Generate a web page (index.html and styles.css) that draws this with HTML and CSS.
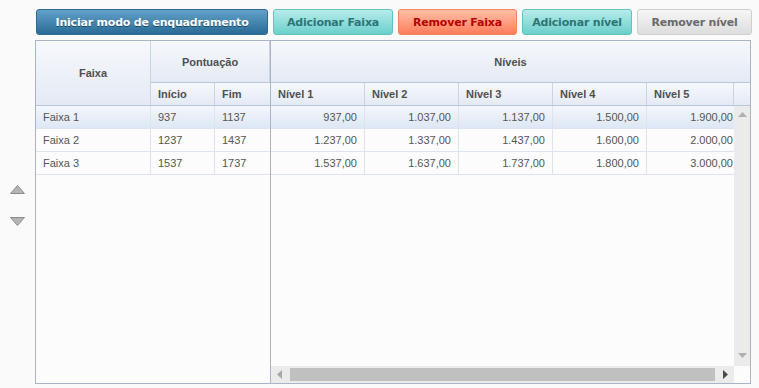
FILE: index.html
```html
<!DOCTYPE html>
<html lang="pt">
<head>
  <meta charset="UTF-8">
  <title>Faixas e níveis</title>
  <link rel="stylesheet" href="styles.css">
</head>
<body>
  <!--barra de botões-->
  <div class="toolbar">
    <button class="btn btn-primary">Iniciar modo de enquadramento</button>
    <button class="btn btn-teal btn-add-band">Adicionar Faixa</button>
    <button class="btn btn-danger">Remover Faixa</button>
    <button class="btn btn-teal btn-add-level">Adicionar nível</button>
    <button class="btn btn-grey">Remover nível</button>
  </div>

  <div class="workspace">
    <!--mover faixa para cima / baixo-->
    <div class="movers">
      <svg width="15" height="9" viewBox="0 0 15 9"><path d="M7.5 0.5 L14.5 8.5 L0.5 8.5 Z" fill="#b4b4b4" stroke="#8c8c8c"/></svg>
      <svg width="15" height="9" viewBox="0 0 15 9"><path d="M0.5 0.5 L14.5 0.5 L7.5 8.5 Z" fill="#b4b4b4" stroke="#8c8c8c"/></svg>
    </div>

    <div class="grid">
      <!--colunas fixas-->
      <div class="pane-left">
        <div class="head head-left">
          <div class="hc hc-faixa">Faixa</div>
          <div class="hc hc-center">Pontuação</div>
          <div class="hc">Início</div>
          <div class="hc">Fim</div>
        </div>
        <div class="row row-left selected">
          <div class="cell">Faixa 1</div><div class="cell">937</div><div class="cell">1137</div>
        </div>
        <div class="row row-left">
          <div class="cell">Faixa 2</div><div class="cell">1237</div><div class="cell">1437</div>
        </div>
        <div class="row row-left">
          <div class="cell">Faixa 3</div><div class="cell">1537</div><div class="cell">1737</div>
        </div>
      </div>

      <!--níveis (rolagem)-->
      <div class="pane-right">
        <div class="head head-right">
          <div class="hc hc-center hc-levels">Níveis</div>
          <div class="hc">Nível 1</div>
          <div class="hc">Nível 2</div>
          <div class="hc">Nível 3</div>
          <div class="hc">Nível 4</div>
          <div class="hc">Nível 5</div>
          <div class="hc hc-fill"></div>
        </div>
        <div class="body-right">
          <div class="viewport">
            <div class="row row-right selected">
              <div class="cell num">937,00</div><div class="cell num">1.037,00</div><div class="cell num">1.137,00</div><div class="cell num">1.500,00</div><div class="cell num">1.900,00</div>
            </div>
            <div class="row row-right">
              <div class="cell num">1.237,00</div><div class="cell num">1.337,00</div><div class="cell num">1.437,00</div><div class="cell num">1.600,00</div><div class="cell num">2.000,00</div>
            </div>
            <div class="row row-right">
              <div class="cell num">1.537,00</div><div class="cell num">1.637,00</div><div class="cell num">1.737,00</div><div class="cell num">1.800,00</div><div class="cell num">3.000,00</div>
            </div>
          </div>
          <div class="vscroll">
            <svg width="9" height="5" viewBox="0 0 9 5"><path d="M4.5 0 L9 5 L0 5 Z" fill="#b0b0b0"/></svg>
            <svg width="9" height="5" viewBox="0 0 9 5"><path d="M0 0 L9 0 L4.5 5 Z" fill="#b0b0b0"/></svg>
          </div>
        </div>
        <div class="foot-right">
          <div class="hscroll">
            <svg width="5" height="9" viewBox="0 0 5 9"><path d="M5 0 L5 9 L0 4.5 Z" fill="#a8a8a8"/></svg>
            <div class="thumb"></div>
            <svg width="5" height="9" viewBox="0 0 5 9"><path d="M0 0 L5 4.5 L0 9 Z" fill="#4a4a4a"/></svg>
          </div>
          <div class="corner"></div>
        </div>
      </div>
    </div>
  </div>
</body>
</html>
```

FILE: styles.css
```css
*{box-sizing: border-box;}
body{
  margin:0;
  background:#fafafa;
  font-family:"Liberation Sans", Arial, sans-serif;
  font-size:11px;
  color:#555;
}

/*botões*/
.toolbar{
  display:flex;
  gap:5px;
  padding:9px 0 0 36px;
}
.btn{
  flex:none;
  height:26px;
  padding:0;
  border:1px solid;
  border-radius:3px;
  font:bold 11px "DejaVu Sans", Verdana, sans-serif;
  letter-spacing:-0.2px;
  white-space:nowrap;
  cursor:pointer;
}
.btn-primary{
  width:232px;
  background:linear-gradient(#62a1c9, #2a6c96);
  border-color:#2d6a90;
  color:#fff;
  text-shadow:0 1px 0 #1b4a68;
}
.btn-teal{
  background:linear-gradient(#b6ecea, #6ccfcb);
  border-color:#5fc4c0;
  color:#2e7475;
}
.btn-add-band{width:120px;}
.btn-add-level{width:110px;}
.btn-danger{
  width:119px;
  background:linear-gradient(#ffc0a8, #ff7c5a);
  border-color:#f2835f;
  color:#b80000;
}
.btn-grey{
  width:115px;
  background:linear-gradient(#f6f6f6, #dddddd);
  border-color:#cfcfcf;
  color:#6a6a6a;
}

/*área da grade*/
.workspace{
  display:flex;
  margin-top:5px;
}
.movers{
  width:35px;
  display:flex;
  flex-direction:column;
  align-items:center;
  gap:23px;
  padding:145px 0 0 0;
}
.grid{
  display:flex;
  width:716px;
  height:344px;
  border:1px solid #a9b4ca;
  background:#fcfcfc;
}

/*cabeçalho*/
.head{display:grid;}
.head-left{grid-template-columns:115px 64px 55px; grid-template-rows:42px 23px;}
.head-right{grid-template-columns:94px 94px 94px 94px 87px 16px; grid-template-rows:42px 23px;}
.hc{
  display:flex;
  align-items:center;
  padding-left:7px;
  font-weight:bold;
  color:#4f4f4f;
  background:linear-gradient(#f6f8fc, #e4eaf4);
  border-right:1px solid #c9d3e2;
  border-bottom:1px solid #b9c5d8;
}
.hc-center{justify-content:center; padding-left:0;}
.hc-faixa{grid-row:1 / span 2; justify-content:center; padding-left:0;}
.head-left .hc-center{grid-column:2 / span 2;}
.head-left .hc:last-child{border-right:none;}
.hc-levels{grid-column:1 / -1; border-right:none;}
.hc-fill{border-right:none;}

/*linhas*/
.pane-left{
  width:235px;
  border-right:1px solid #a9b4ca;
}
.pane-right{
  width:479px;
  display:flex;
  flex-direction:column;
}
.row{display:grid; height:23px;}
.row-left{grid-template-columns:115px 64px 55px;}
.row-right{grid-template-columns:repeat(5, 94px); width:470px;}
.cell{
  display:flex;
  align-items:center;
  padding:0 7px;
  border-right:1px solid #dde3ec;
  border-bottom:1px solid #dde3ec;
  white-space:nowrap;
}
.row-left .cell:last-child{border-right:none;}
.num{justify-content:flex-end;}
.selected{background:linear-gradient(#f4f7fc, #dce6f4);}

/*barras de rolagem*/
.body-right{
  flex:1;
  display:flex;
}
.viewport{
  width:463px;
  overflow:hidden;
}
.vscroll{
  width:16px;
  background:#ebebeb;
  display:flex;
  flex-direction:column;
  justify-content:space-between;
  align-items:center;
  padding:6px 0 8px 0;
}
.foot-right{
  height:17px;
  display:flex;
}
.hscroll{
  width:463px;
  background:#ebebeb;
  display:flex;
  align-items:center;
  gap:8px;
  padding:0 6px;
}
.thumb{
  flex:1;
  height:13px;
  background:#c0c0c0;
}
.corner{flex:1; background:#fcfcfc;}
```
